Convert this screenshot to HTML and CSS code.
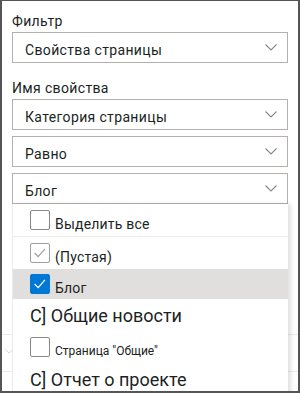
FILE: index.html
```html
<!DOCTYPE html>
<html lang="ru">
<head>
    <meta charset="UTF-8">
    <meta name="viewport" content="width=device-width, initial-scale=1.0">
    <title>Фильтр</title>
    <link rel="stylesheet" href="styles.css">
</head>
<body>
    <div class="frame">
        <div class="panel">
            <div class="field-label">Фильтр</div>
            <div class="select">
                <span class="select-text">Свойства страницы</span>
                <svg class="chevron" viewBox="0 0 12 7"><path d="M0.5 0.5 L6 6 L11.5 0.5"/></svg>
            </div>

            <div class="field-label second">Имя свойства</div>
            <div class="select">
                <span class="select-text">Категория страницы</span>
                <svg class="chevron" viewBox="0 0 12 7"><path d="M0.5 0.5 L6 6 L11.5 0.5"/></svg>
            </div>
            <div class="select">
                <span class="select-text">Равно</span>
                <svg class="chevron" viewBox="0 0 12 7"><path d="M0.5 0.5 L6 6 L11.5 0.5"/></svg>
            </div>
            <div class="select open">
                <span class="select-text">Блог</span>
                <svg class="chevron" viewBox="0 0 12 7"><path d="M0.5 0.5 L6 6 L11.5 0.5"/></svg>

                <!-- Выпадающий список -->
                <div class="dropdown-list">
                    <div class="option divided">
                        <span class="checkbox"></span>
                        <span class="option-text">Выделить все</span>
                    </div>
                    <div class="option">
                        <span class="checkbox disabled">
                            <svg viewBox="0 0 20 20"><path d="M4 10 L8 14 L15.5 5.5"/></svg>
                        </span>
                        <span class="option-text">(Пустая)</span>
                    </div>
                    <div class="option selected">
                        <span class="checkbox checked">
                            <svg viewBox="0 0 20 20"><path d="M4 10 L8 14 L15.5 5.5"/></svg>
                        </span>
                        <span class="option-text">Блог</span>
                    </div>
                    <div class="group-title">C] Общие новости</div>
                    <div class="option small">
                        <span class="checkbox"></span>
                        <span class="option-text">Страница "Общие"</span>
                    </div>
                    <div class="group-title">C] Отчет о проекте</div>
                </div>
            </div>

            <!-- Поле за списком -->
            <div class="ghost-row">
                <svg class="chevron" viewBox="0 0 12 7"><path d="M0.5 0.5 L6 6 L11.5 0.5"/></svg>
            </div>
        </div>
    </div>
</body>
</html>
```

FILE: styles.css
```css
* {
    margin: 0;
    padding: 0;
    box-sizing: border-box;
}

body {
    font-family: Roboto, "Liberation Sans", sans-serif;
    color: #201f1e;
    background-color: #fff;
}

.frame {
    width: 300px;
    height: 393px;
    border-style: solid;
    border-color: #555;
    border-width: 1px 2px 2px 2px;
    overflow: hidden;
}

.panel {
    padding: 10px 10px 0 10px;
}

.field-label {
    font-size: 14px;
    line-height: 20px;
    letter-spacing: 0.35px;
    margin-bottom: 1px;
}

.field-label.second {
    margin-top: 15px;
}

.select {
    position: relative;
    height: 31px;
    border: 1px solid #b3b0ad;
    display: flex;
    align-items: center;
    justify-content: space-between;
    padding: 0 10px 0 12px;
    margin-bottom: 6px;
}

.select-text {
    font-size: 14px;
    line-height: 20px;
    letter-spacing: 0.35px;
    padding-top: 4px;
}

.chevron {
    width: 12px;
    height: 7px;
    fill: none;
    stroke: #8a8886;
    stroke-width: 1.1;
}

/* Выпадающий список */
.dropdown-list {
    position: absolute;
    top: 30px;
    left: -1px;
    width: 276px;
    background-color: #fff;
    border-left: 1px solid #edebe9;
    box-shadow: 3px 0 4px rgba(0, 0, 0, 0.12);
    z-index: 10;
}

.option {
    display: flex;
    align-items: center;
    height: 32px;
    padding-left: 17px;
}

.option.divided {
    height: 33px;
    border-bottom: 1px solid #edebe9;
}

.option.selected {
    height: 30px;
    background-color: #e1dfdd;
}

.option-text {
    font-size: 14px;
    line-height: 18px;
    letter-spacing: 0.2px;
    padding-top: 7px;
    margin-left: 5px;
}

.option.small .option-text {
    font-size: 12px;
    letter-spacing: 0;
}

.checkbox {
    width: 20px;
    height: 20px;
    border: 1px solid #8a8886;
    border-radius: 2px;
    background-color: #fff;
    display: flex;
    align-items: center;
    justify-content: center;
}

.checkbox svg {
    width: 20px;
    height: 20px;
    fill: none;
    stroke-width: 1.3;
}

.checkbox.disabled {
    border-color: #a19f9d;
}

.checkbox.disabled svg {
    stroke: #a19f9d;
}

.checkbox.checked {
    background-color: #0078d4;
    border-color: #0078d4;
}

.checkbox.checked svg {
    stroke: #fff;
}

.group-title {
    font-size: 18px;
    line-height: 32px;
    height: 32px;
    padding-left: 17px;
    padding-top: 1px;
}

.ghost-row {
    margin: 130px -10px 0 -10px;
    height: 38px;
    border-top: 1px solid #edebe9;
    border-bottom: 1px solid #edebe9;
    padding: 14px 0 0 3px;
    display: flex;
    align-items: flex-start;
}

.ghost-row .chevron {
    width: 8px;
    height: 5px;
    stroke: #c8c6c4;
}
```
